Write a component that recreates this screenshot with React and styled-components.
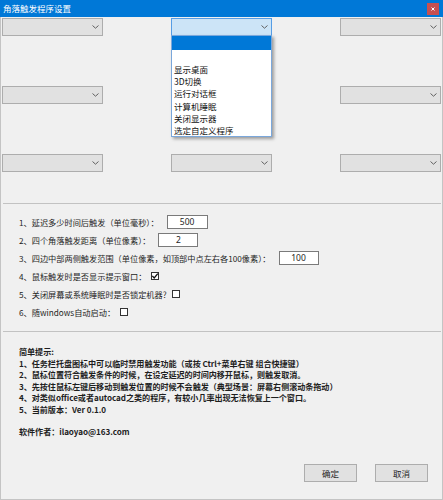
// corner trigger settings dialog

import React from "react";
import styled, { createGlobalStyle } from "styled-components";

const GlobalStyle = createGlobalStyle`
  html, body {
    margin: 0;
    padding: 0;
    background: #f0f0f0;
  }
  #root {
    width: 443px;
    height: 500px;
  }
`;

const actions = ["显示桌面", "3D切换", "运行对话框", "计算机睡眠", "关闭显示器", "选定自定义程序"];

const settings = [
  { label: "1、延迟多少时间后触发（单位毫秒）：", value: "500", width: 41 },
  { label: "2、四个角落触发距离（单位像素）：", value: "2", width: 40 },
  { label: "3、四边中部两侧触发范围（单位像素，如顶部中点左右各100像素）：", value: "100", width: 40 },
  { label: "4、鼠标触发时是否显示提示窗口：", checked: true },
  { label: "5、关闭屏幕或系统睡眠时是否锁定机器?", checked: false },
  { label: "6、随windows自动启动：", checked: false },
];

const tips = [
  "1、任务栏托盘图标中可以临时禁用触发功能（或按 Ctrl+菜单右键 组合快捷键）",
  "2、鼠标位置符合触发条件的时候，在设定延迟的时间内移开鼠标，则触发取消。",
  "3、先按住鼠标左键后移动到触发位置的时候不会触发（典型场景：屏幕右侧滚动条拖动）",
  "4、对类似office或者autocad之类的程序，有较小几率出现无法恢复上一个窗口。",
  "5、当前版本：Ver 0.1.0",
];

const Chevron = () => (
  <svg width="7" height="4" viewBox="0 0 7 4">
    <polyline points="0.5,0.5 3.5,3.2 6.5,0.5" fill="none" stroke="#606060" strokeWidth="1" />
  </svg>
);

const Combo = ({ open }) => (
  <ComboWrap open={open}>
    <ComboBox open={open}>
      <Chevron />
    </ComboBox>
    {open && (
      <DropList>
        <DropItem selected tall />
        <DropItem tall />
        {actions.map((a) => (
          <DropItem key={a}>{a}</DropItem>
        ))}
      </DropList>
    )}
  </ComboWrap>
);

const App = () => {
  return (
    <Window>
      <GlobalStyle />
      <TitleBar>
        <Title>角落触发程序设置</Title>
        <CloseButton>
          <svg width="4" height="4" viewBox="0 0 4 4">
            <path d="M0.5 0.5 L3.5 3.5 M3.5 0.5 L0.5 3.5" stroke="#fff" strokeWidth="1" />
          </svg>
        </CloseButton>
      </TitleBar>
      <Body>
        <ComboGrid>
          <Combo />
          <Combo open />
          <Combo />
          <Combo />
          <Combo />
          <Combo />
          <Combo />
          <Combo />
          <Combo />
        </ComboGrid>
        <Divider />
        <Settings>
          {settings.map((s) => (
            <SettingRow key={s.label}>
              <span>{s.label}</span>
              {s.value !== undefined ? (
                <NumberBox style={{ width: s.width }}>{s.value}</NumberBox>
              ) : (
                <CheckBox>
                  {s.checked && (
                    <svg width="8" height="8" viewBox="0 0 8 8">
                      <polyline points="1.3,3.8 3.2,6 6.8,1.6" fill="none" stroke="#111" strokeWidth="1.3" />
                    </svg>
                  )}
                </CheckBox>
              )}
            </SettingRow>
          ))}
        </Settings>
        <Divider />
        <Tips>
          <TipLine>简单提示:</TipLine>
          {tips.map((t) => (
            <TipLine key={t}>{t}</TipLine>
          ))}
          <Author>软件作者：ilaoyao@163.com</Author>
        </Tips>
        <Footer>
          <Button>确定</Button>
          <Button>取消</Button>
        </Footer>
      </Body>
    </Window>
  );
};

const Window = styled.div`
  width: 443px;
  height: 500px;
  display: flex;
  flex-direction: column;
  background-color: #f0f0f0;
  font-family: "Noto Sans CJK SC", "Noto Sans", sans-serif;
  color: #1e1e1e;
  overflow: hidden;
`;

const TitleBar = styled.div`
  height: 17px;
  background-color: #0078d7;
  display: flex;
  align-items: center;
  justify-content: space-between;
  padding: 0 3px 0 3px;
`;

const Title = styled.div`
  color: white;
  font-size: 8.5px;
  line-height: 17px;
`;

const CloseButton = styled.div`
  width: 12px;
  height: 12px;
  background-color: #c75050;
  display: flex;
  align-items: center;
  justify-content: center;
  margin-right: 1px;
`;

const Body = styled.div`
  flex: 1;
  display: flex;
  flex-direction: column;
  border: 1px solid #c4c4c4;
  border-top: none;
`;

const ComboGrid = styled.div`
  display: grid;
  grid-template-columns: 101px 101px 101px;
  grid-template-rows: 18px 18px 18px;
  justify-content: space-between;
  row-gap: 50px;
  padding: 1px 1px 0 1px;
`;

const ComboWrap = styled.div`
  position: relative;
  z-index: ${(p) => (p.open ? 2 : 1)};
`;

const ComboBox = styled.div`
  height: 18px;
  box-sizing: border-box;
  background-color: ${(p) => (p.open ? "#cce4f7" : "#e1e1e1")};
  border: 1px solid ${(p) => (p.open ? "#569de5" : "#adadad")};
  display: flex;
  align-items: center;
  justify-content: flex-end;
  padding-right: 3px;
`;

const DropList = styled.div`
  position: absolute;
  top: 17px;
  left: 0;
  width: 101px;
  box-sizing: border-box;
  background-color: white;
  border: 1px solid #7aa7db;
  box-shadow: 2px 2px 3px rgba(0, 0, 0, 0.35);
`;

const DropItem = styled.div`
  height: ${(p) => (p.tall ? "13.5px" : "12.2px")};
  line-height: 12.2px;
  font-size: 8.5px;
  padding-left: 2px;
  color: #111;
  white-space: nowrap;
  background-color: ${(p) => (p.selected ? "#0078d7" : "white")};
`;

const Divider = styled.div`
  height: 1px;
  background-color: #c2c2c2;
  margin: 31px 1px 0 2px;
`;

const Settings = styled.div`
  padding: 9px 0 0 18px;
  margin-bottom: 10px;

  & + ${Divider} {
    margin-top: 0;
  }
`;

const SettingRow = styled.div`
  height: 18px;
  display: flex;
  align-items: center;
  font-size: 8.2px;
  white-space: nowrap;
`;

const NumberBox = styled.div`
  height: 14px;
  box-sizing: border-box;
  margin-left: 8px;
  background-color: white;
  border: 1px solid #7a7a7a;
  font-family: "Noto Sans", sans-serif;
  font-size: 8.5px;
  line-height: 12px;
  text-align: center;
`;

const CheckBox = styled.div`
  width: 8px;
  height: 8px;
  box-sizing: border-box;
  margin-left: 5px;
  border: 1px solid #333;
  background-color: white;
  display: flex;
  align-items: center;
  justify-content: center;

  svg {
    flex: none;
  }
`;

const Tips = styled.div`
  padding: 14px 0 0 18px;
  font-size: 8.1px;
  letter-spacing: -0.05px;
  font-weight: bold;
`;

const TipLine = styled.div`
  line-height: 11.5px;
  white-space: nowrap;
`;

const Author = styled(TipLine)`
  margin-top: 11px;
`;

const Footer = styled.div`
  margin-top: auto;
  display: flex;
  justify-content: flex-end;
  gap: 18px;
  padding: 0 14px 17px 0;
`;

const Button = styled.div`
  width: 53px;
  height: 18px;
  box-sizing: border-box;
  background-color: #e1e1e1;
  border: 1px solid #adadad;
  font-size: 8.5px;
  display: flex;
  align-items: center;
  justify-content: center;
`;

export default App;
